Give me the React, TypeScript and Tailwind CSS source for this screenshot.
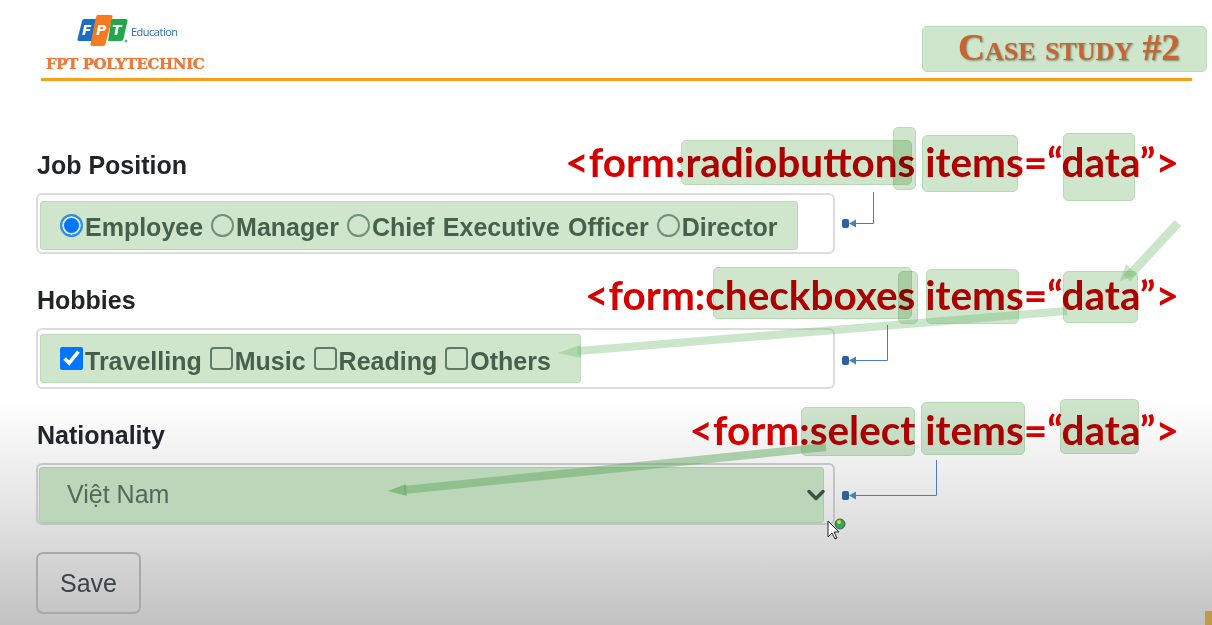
import { ChevronDown } from 'lucide-react';

const jobs = ['Employee', 'Manager', 'Chief Executive Officer', 'Director'];
const hobbies = ['Travelling', 'Music', 'Reading', 'Others'];

// annotation boxes laid over the slide: x, y, w, h
const marks = [
  [681, 140, 231, 45],
  [893, 127, 23, 63],
  [922, 135, 96, 57],
  [1063, 133, 72, 68],
  [713, 267, 199, 52],
  [898, 271, 20, 53],
  [926, 269, 93, 55],
  [1063, 271, 75, 52],
  [801, 407, 114, 49],
  [921, 402, 104, 53],
  [1060, 399, 79, 55],
];

const codeLines = [
  { text: '<form:radiobuttons items=“data”>', top: 'top-[136px]' },
  { text: '<form:checkboxes items=“data”>', top: 'top-[269px]' },
  { text: '<form:select items=“data”>', top: 'top-[404px]' },
];

function Logo() {
  return (
    <svg width="54" height="34" viewBox="0 0 54 34" className="shrink-0">
      <path d="M7 5 H23 Q25 5 24.5 7 L20 25 Q19.5 27 17 27 H2 Q0 27 0.5 25 L5 7 Q5.500 5 7 5 Z" fill="#1b6fc2" />
      <path d="M21 1 H34 Q36 1 35.500 3 L28.500 30 Q28 32 26 32 H15 Q13 32 13.500 30 L19 3 Q19.300 1 21 1 Z" fill="#f47b20" />
      <path d="M35 5 H49 Q51 5 50.500 7 L46.500 25 Q46 27 44 27 H31 L34 7 Q34.300 5 35 5 Z" fill="#22a84a" />
      <text x="5" y="21" fontSize="14" fontWeight="700" fontStyle="italic" fill="#fff" fontFamily="DejaVu Sans">F</text>
      <text x="19" y="21" fontSize="14" fontWeight="700" fontStyle="italic" fill="#fff" fontFamily="DejaVu Sans">P</text>
      <text x="35" y="21" fontSize="14" fontWeight="700" fontStyle="italic" fill="#fff" fontFamily="DejaVu Sans">T</text>
      <circle cx="49" cy="27" r="1.5" fill="#7a9cc0" />
    </svg>
  );
}

function Overlay() {
  const green = 'rgba(112,186,112,0.36)';
  return (
    <svg width="1212" height="625" viewBox="0 0 1212 625" className="absolute inset-0 pointer-events-none">
      {/* green arrows */}
      <path d="M1178 223 L1127 278" stroke={green} strokeWidth="9" fill="none" />
      <path d="M1120 281 L1126 264 L1137 275 Z" fill={green} />
      <path d="M1067 311 L578 351" stroke={green} strokeWidth="8" fill="none" />
      <path d="M558 353 L580 345 L581 358 Z" fill={green} />
      <path d="M826 447 L404 490" stroke="rgba(100,170,100,0.5)" strokeWidth="8" fill="none" />
      <path d="M388 491 L406 484 L407 496 Z" fill="rgba(100,170,100,0.65)" />

      {/* blue connectors */}
      <path d="M873.5 192 V223.5 H853" stroke="#4a7ebb" strokeWidth="1" fill="none" />
      <path d="M887.5 325 V360.5 H853" stroke="#4a7ebb" strokeWidth="1" fill="none" />
      <path d="M936.5 460 V495.5 H853" stroke="#4a7ebb" strokeWidth="1" fill="none" />
      {[223, 360, 495].map((y) => (
        <g key={y}>
          <rect x="842" y={y - 4} width="7" height="9" rx="2" fill="#2f5f9e" />
          <path d={`M849 ${y + 0.5} L856 ${y - 3.5} V${y + 4.5} Z`} fill="#4a7ebb" />
        </g>
      ))}

      {/* mouse cursor with busy globe */}
      <path d="M828 521 V537 L832 533 L835 539 L837 538 L834 532 L839 532 Z" fill="#fff" stroke="#222" strokeWidth="1" />
      <circle cx="840" cy="524" r="5" fill="#35a84f" stroke="#555" strokeWidth="1" />
      <circle cx="839" cy="522" r="2" fill="#d8d23a" />

      <rect x="1205" y="611" width="7" height="14" fill="#c09a45" />
    </svg>
  );
}

export default function App() {
  return (
    <div className="relative w-[1212px] h-[625px] overflow-hidden blur-[0.4px] bg-[linear-gradient(to_bottom,#ffffff_0%,#ffffff_64%,#e6e6e6_80%,#c2c2c2_100%)] font-['Liberation_Sans',sans-serif] text-[#212529]">
      <header className="ml-[41px] w-[1151px] h-[81px] border-b-[3px] border-[#f7a11a] flex justify-between">
        <div className="pl-[5px] pt-[15px]">
          <div className="flex items-center pl-[31px] h-[32px]">
            <Logo />
            <span className="mt-[2px] text-[11px] text-[#2a6ebb] font-['Open_Sans',sans-serif] tracking-[-0.5px]">Education</span>
          </div>
          <div className="mt-[8px] text-[15px] leading-[18px] font-bold text-[#ea7a3c] font-['DejaVu_Serif',serif] tracking-[-0.4px] whitespace-nowrap [text-shadow:0_0_1px_#ea7a3c]">FPT POLYTECHNIC</div>
        </div>
        <div className="mt-[26px] mr-[-15px] w-[285px] h-[46px] rounded-[5px] bg-[#cfe5cc] border border-[#bcdcb9] flex items-center justify-end pr-[26px]">
          <span className="mb-[2px] font-['Liberation_Serif',serif] font-bold text-[37.500px] text-[#cb6230] [font-variant:small-caps] leading-none [text-shadow:1px_1px_2px_#6f9a78] whitespace-nowrap">Case study #2</span>
        </div>
      </header>

      <form className="pl-[36px] pt-[69px] w-[835px]">
        <label className="block pl-[1px] text-[25px] leading-[30px] font-bold">Job Position</label>
        <div className="mt-[13px] h-[61px] border-2 border-[#dcdcdc] rounded-[6px] pl-[2px] pt-[6px]">
          <div className="w-[758px] h-[49px] flex items-center pl-[19px] gap-[8px] rounded-[3px] bg-[#cfe5cc] border border-[#bcdcb9] text-[25px] font-bold text-[#45604d] whitespace-nowrap [word-spacing:1.5px]">
            {jobs.map((job, i) => (
              <span key={job} className="flex items-center">
                <input
                  type="radio"
                  name="job"
                  defaultChecked={i === 0}
                  className="appearance-none w-[23px] h-[23px] m-0 mr-[2px] rounded-full border-2 border-[#71907a] checked:border-[#2f8fdc] checked:bg-[#0075ff] checked:shadow-[inset_0_0_0_2px_#dbeaf5]"
                />
                <span className="mt-[4px]">{job}</span>
              </span>
            ))}
          </div>
        </div>

        <label className="block mt-[31px] pl-[1px] text-[25px] leading-[30px] font-bold">Hobbies</label>
        <div className="mt-[13px] h-[61px] border-2 border-[#dcdcdc] rounded-[6px] pl-[2px] pt-[4px]">
          <div className="w-[541px] h-[49px] flex items-center pl-[19px] gap-[8px] rounded-[3px] bg-[#cfe5cc] border border-[#bcdcb9] text-[25px] font-bold text-[#45604d] whitespace-nowrap">
            {hobbies.map((hobby, i) => (
              <span key={hobby} className="flex items-center">
                <input
                  type="checkbox"
                  defaultChecked={i === 0}
                  className="appearance-none checked:appearance-auto w-[23px] h-[23px] m-0 mr-[2px] rounded-[4px] border-2 border-[#5f7a65] accent-[#0075ff]"
                />
                <span className="mt-[7px]">{hobby}</span>
              </span>
            ))}
          </div>
        </div>

        <label className="block mt-[31px] pl-[1px] text-[25px] leading-[30px] font-bold">Nationality</label>
        <div className="mt-[13px] h-[62px] border-2 border-[#c4c4c4] rounded-[6px] pl-[1px] pt-[2px]">
          <div className="relative w-[785px] h-[56px] flex items-center pl-[27px] rounded-[3px] bg-[#bcd6b9] border border-[#a8cda5] text-[25px] text-[#4f6b5c]">
            Việt Nam
            <ChevronDown className="absolute right-[-7px] top-[13px] w-[28px] h-[28px] text-[#3c5145]" strokeWidth={3} />
          </div>
        </div>

        <button type="button" className="block mt-[27px] w-[105px] h-[62px] border-2 border-[#a9a9a9] rounded-[7px] pt-[2px] text-[25px] text-[#3d4249]">Save</button>
      </form>

      {codeLines.map((line) => (
        <div key={line.text} className={`absolute right-[33px] ${line.top} font-['Lato',sans-serif] font-bold text-[40.500px] leading-[52px] text-[#d40000] whitespace-nowrap`}>
          {line.text}
        </div>
      ))}
      {marks.map(([x, y, w, h]) => (
        <div
          key={`${x}-${y}`}
          className="absolute rounded-[5px] bg-[#cfe5cc] border border-[#b8dab5] mix-blend-multiply"
          style={{ left: x, top: y, width: w, height: h }}
        />
      ))}
      <Overlay />
    </div>
  );
}
